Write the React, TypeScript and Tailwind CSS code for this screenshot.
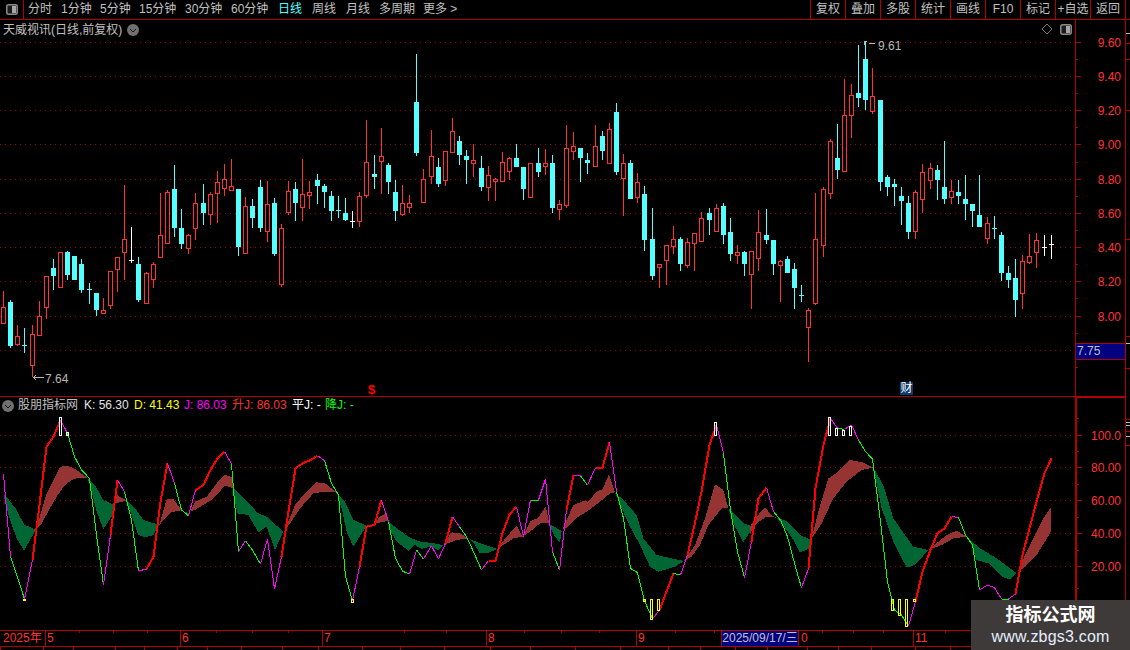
import React from "react";

const RED = "#b00000";
const cx = (i: number) => Math.round(3 + 7.127 * i);

// hi, top, bottom, low, kind (page pixel rows)
const C: [number, number, number, number, string][] = [
  [291,307,323,323,"r"],[300,302,346,348,"c"],[325,336,344,346,"r"],[328,345,345,353,"c"],[325,334,365,377,"r"],
  [301,316,335,335,"r"],[276,276,307,319,"r"],[259,268,276,290,"c"],[252,252,287,287,"r"],[251,252,275,280,"c"],
  [256,256,280,280,"c"],[259,264,290,293,"c"],[283,289,290,304,"c"],[293,293,310,316,"c"],[298,310,313,314,"r"],
  [271,271,305,309,"r"],[257,257,269,292,"r"],[185,239,252,280,"r"],[227,260,260,263,"w"],[257,264,300,302,"c"],
  [272,273,303,304,"r"],[262,264,279,288,"r"],[193,235,257,257,"r"],[190,192,243,243,"r"],[165,189,228,237,"c"],
  [209,228,244,249,"c"],[234,235,248,254,"r"],[193,203,228,240,"r"],[184,203,213,225,"c"],[192,194,214,225,"r"],
  [171,182,193,223,"r"],[164,179,188,196,"r"],[159,186,190,190,"r"],[189,189,247,256,"c"],[197,206,253,254,"r"],
  [199,206,218,228,"c"],[180,187,228,232,"c"],[181,204,231,242,"r"],[198,203,254,256,"c"],[224,228,284,287,"r"],
  [181,191,212,215,"r"],[182,189,203,221,"c"],[159,194,207,221,"r"],[181,192,195,209,"r"],[174,180,186,204,"c"],
  [184,186,192,208,"c"],[191,196,211,221,"c"],[196,210,211,218,"c"],[198,213,220,221,"c"],[211,221,221,228,"w"],
  [192,196,221,227,"r"],[120,162,195,198,"r"],[155,174,177,189,"c"],[128,156,161,194,"r"],[163,165,182,194,"c"],
  [180,192,211,221,"c"],[185,203,214,216,"r"],[195,203,207,213,"r"],[54,102,153,156,"c"],[169,179,202,202,"r"],
  [130,156,176,184,"r"],[158,167,184,187,"c"],[151,151,180,186,"r"],[118,131,152,152,"r"],[136,141,155,165,"c"],
  [150,156,160,184,"c"],[144,160,163,177,"r"],[156,168,187,191,"c"],[166,175,187,201,"r"],[178,179,181,201,"r"],
  [152,162,181,182,"r"],[157,158,171,180,"r"],[144,158,167,167,"c"],[167,167,189,200,"c"],[163,163,197,197,"r"],
  [148,163,172,177,"c"],[149,163,166,175,"r"],[155,163,208,213,"c"],[200,204,209,220,"r"],[125,148,205,208,"r"],
  [132,146,151,160,"r"],[148,148,158,182,"c"],[153,160,163,174,"c"],[125,146,166,166,"r"],[131,136,151,160,"c"],
  [123,129,163,163,"r"],[103,112,172,175,"c"],[154,163,178,216,"r"],[160,163,199,199,"c"],[173,182,197,203,"r"],
  [186,194,240,251,"c"],[208,239,276,280,"c"],[264,264,267,288,"r"],[245,245,260,285,"r"],[226,239,246,254,"r"],
  [237,239,264,271,"c"],[238,242,265,268,"r"],[233,233,243,271,"r"],[212,218,241,242,"r"],[208,213,220,235,"c"],
  [204,208,231,231,"r"],[203,206,235,244,"c"],[218,232,254,261,"c"],[245,252,255,264,"r"],[251,252,264,276,"c"],
  [251,251,274,309,"r"],[210,232,258,271,"r"],[209,235,240,244,"c"],[240,240,264,275,"c"],[260,261,265,302,"r"],
  [256,259,273,273,"c"],[263,269,288,309,"c"],[285,295,296,302,"c"],[308,310,327,362,"r"],[193,239,303,305,"r"],
  [187,189,245,257,"r"],[139,141,193,199,"r"],[124,158,170,179,"c"],[79,115,171,171,"r"],[84,95,115,138,"r"],
  [45,93,98,107,"c"],[41,59,100,110,"c"],[68,96,111,114,"r"],[100,100,182,191,"c"],[175,177,187,196,"c"],
  [179,184,187,206,"c"],[187,196,201,225,"c"],[196,203,232,239,"c"],[190,192,231,239,"r"],[164,172,199,213,"r"],
  [163,168,180,189,"r"],[165,170,180,200,"c"],[141,187,199,204,"c"],[180,191,197,204,"r"],[180,192,196,204,"c"],
  [175,199,204,220,"c"],[204,204,211,227,"c"],[175,215,227,227,"c"],[217,223,238,244,"r"],[216,228,229,239,"c"],
  [232,235,273,281,"c"],[266,273,280,288,"c"],[259,278,300,317,"c"],[255,261,293,309,"r"],[234,256,262,264,"r"],
  [233,240,252,268,"r"],[235,247,247,256,"w"],[235,244,244,259,"w"],
];

const UP_GRID = [42, 76, 110, 144, 179, 213, 247, 281, 316, 350];
const UP_LABELS: [number, string][] = [[42,"9.60"],[76,"9.40"],[110,"9.20"],[144,"9.00"],[179,"8.80"],[213,"8.60"],[247,"8.40"],[281,"8.20"],[316,"8.00"]];
const UP_MINOR = [59, 93, 127, 162, 196, 230, 264, 298, 333, 367];
const LO_LABELS: [number, string][] = [[435,"100.0"],[467,"80.00"],[500,"60.00"],[533,"40.00"],[566,"20.00"]];
const LO_MINOR = [418, 451, 484, 517, 550, 588];

const J = "237m 485g 548g 612m 495r 330r 155r 125r 75m 115g 185g 225g 250g 420g 570m 420r 255m 290g 375g 528m 522r 485r 320r 205m 265g 345g 362m 285r 270r 225r 190r 170m 207g 470m 437g 465g 507m 432m 582m 485r 350r 220r 205r 197r 182m 197g 265g 300g 545g 617m 515r 395r 390r 315m 380g 490g 528g 538m 465g 492m 452m 492m 445r 365m 395g 425g 470g 525m 497r 497r 415r 358r 335m 425m 315g 315m 252m 470g 525m 345r 240m 243g 270m 218r 218r 142m 290g 370g 520g 533g 617g 672m 645r 590r 535g 540m 480r 390r 290r 150r 90m 175g 345g 470g 548m 440r 310r 278m 350g 375g 425g 505g 578m 520r 280r 150r 70m 100g 103m 90m 135g 170g 192g 380g 560g 645g 660g 693m 620r 530r 465r 415r 400r 365m 367g 420g 450g 585m 570m 578m 612g 612m 597r 480r 400r 320r 235r 190r".split(" ");
const jy = (s: string) => 395 + parseInt(s) / 3;

// ribbon lobes: [zoom frame x offset, colour, points in 3x crop coordinates]
const RB = "#963333";
const GR = "#006633";
const R: [number, string, string][] = [
  [0,GR,"10,295 25,312 50,345 72,388 108,405 90,435 72,467 50,430 30,375 20,340"],
  [0,RB,"108,405 125,345 140,295 160,255 180,215 205,213 225,222 262,248 235,248 215,255 195,270 170,305 150,340 125,385"],
  [0,GR,"262,248 285,270 310,315 340,328 338,360 310,402 290,350 270,270"],
  [0,RB,"338,350 350,300 380,317 345,325"],
  [0,GR,"380,315 405,340 430,375 478,390 460,420 435,427 415,420 395,360"],
  [0,RB,"478,390 500,312 520,312 545,345 515,352 495,370"],
  [0,GR,"545,347 570,355 560,362"],
  [0,RB,"570,350 585,320 620,305 650,265 675,240 700,248 700,280 675,272 640,310 610,330 585,345"],
  [0,GR,"700,280 730,310 775,355 800,365 850,410 825,465 800,395 775,412 745,360 712,355 705,320"],
  [0,RB,"855,405 885,330 910,300 950,262 975,265 1010,292 975,290 940,295 900,340 870,385"],
  [0,GR,"1010,292 1035,320 1060,375 1100,392 1060,455 1040,410 1025,340"],
  [0,RB,"1100,392 1120,388 1140,365 1160,355 1162,378 1142,382 1120,388"],
  [380,GR,"22,375 50,400 90,428 120,440 150,443 190,450 175,465 150,455 125,462 105,450 85,467 50,440 30,405"],
  [380,RB,"190,448 215,412 240,415 265,430 230,435 205,445"],
  [380,GR,"265,430 300,445 352,462 320,475 300,475 285,450"],
  [380,RB,"352,460 380,425 410,392 428,425 400,430 370,450"],
  [380,RB,"428,425 450,380 475,368 497,335 508,385 480,385 450,410"],
  [380,GR,"508,388 545,407 540,442 525,425 515,405"],
  [380,RB,"547,405 580,330 610,318 625,320 650,290 668,282 687,237 705,292 690,295 660,320 620,350 590,368 565,395"],
  [380,GR,"705,292 735,320 770,360 790,430 830,480 875,490 912,498 885,515 835,530 810,515 780,450 750,395 725,340"],
  [380,RB,"912,498 945,450 975,370 1005,268 1030,285 1045,340 1025,340 985,390 960,450 935,485"],
  [380,GR,"1045,340 1090,385 1120,395 1090,442 1065,395"],
  [750,RB,"0,395 20,365 45,337 65,362 80,368 50,365 20,385 0,415"],
  [750,GR,"80,368 110,378 150,420 185,435 178,460 150,473 130,435 110,405"],
  [750,RB,"185,430 205,350 235,250 265,230 300,195 340,203 370,218 335,225 290,260 250,310 215,385"],
  [750,GR,"370,218 400,270 430,370 490,455 535,465 495,510 470,518 430,440 395,340"],
  [750,RB,"535,465 590,420 620,407 650,425 610,430 575,450"],
  [750,GR,"650,425 690,460 740,490 800,535 780,553 755,545 715,505 680,495 665,450"],
  [750,RB,"803,530 830,470 880,370 903,337 903,410 860,480 820,520"],
];

// hollow marker bars: page x, top, bottom, colour
const BARS: [number, number, number, string][] = [
  [60,417,435,"#ffffff"],[67,432,435,"#ffffff"],[715,422,435,"#ffffff"],[829,417,435,"#ffffff"],[836,428,435,"#ffffff"],[843,430,435,"#ffffff"],[850,426,435,"#ffffff"],
  [24,599,600,"#ffff00"],[352,599,602,"#ffff00"],[644,599,601,"#ffff00"],[651,599,619,"#ffff00"],[658,599,610,"#ffff00"],
  [892,599,610,"#ffff00"],[899,599,615,"#ffff00"],[906,599,626,"#ffff00"],[914,599,601,"#ffff00"],
];

const TICKS_TOP = [79,113,147,216,252,288,404,446,524,561,599,675,714,822,853,883,945];
const TICKS_BOTTOM = [0,43,73,115,144,177,207,241,282,318,362,400,444,490,530,575,620,668,700,735,767,807,838,871,915,950];
const STRIP: [number, string][] = [[33,"#bbbbbb"],[43,"#b00000"],[59,"#b00000"],[110,"#b00000"],[239,"#b00000"],[336,"#b00000"],[343,"#bbbbbb"],[368,"#b00000"]];
const STRIP_LOW: [number, string][] = [[419,"#b00000"],[422,"#bbbbbb"],[425,"#bbbbbb"],[431,"#b00000"],[436,"#bbbbbb"],[445,"#b00000"]];

function Chevron() {
  return (
    <svg width="12" height="12" viewBox="0 0 12 12" shapeRendering="crispEdges">
      <circle cx="6" cy="6" r="6" fill="#707070" shapeRendering="auto" />
      <path d="M3 5h1v1h1v1h2v-1h1v-1h1v1h-1v1h-1v1h-2v-1h-1v-1h-1z" fill="#161616" />
    </svg>
  );
}

function Toggle() {
  return (
    <svg width="12" height="11" viewBox="0 0 12 11">
      <rect x="0.75" y="0.75" width="10.5" height="9.5" rx="2" fill="#1c1c1c" stroke="#8a8a8a" strokeWidth="1.5" />
      <rect x="6" y="2" width="4" height="7" fill="#a8a8a8" />
    </svg>
  );
}

function UpperChart() {
  return (
    <svg className="block h-[376px] w-[1075px]" viewBox="0 20 1075 376" shapeRendering="crispEdges">
      {UP_GRID.map((y) => (
        <line key={y} x1="0" x2="1075" y1={y + 0.5} y2={y + 0.5} stroke="#a00000" strokeDasharray="1 4" />
      ))}
      {C.map(([h, t, b, l, k], i) => {
        const x = cx(i);
        const col = k === "r" ? "#ff3232" : k === "c" ? "#54ffff" : "#ffffff";
        return (
          <g key={i}>
            <rect x={x} y={h} width="1" height={Math.max(1, l - h)} fill={col} />
            {k === "r" ? (
              <rect x={x - 1.5} y={t + 0.5} width="4" height={Math.max(1, b - t)} fill="#000" stroke={col} />
            ) : (
              <rect x={x - 2} y={t} width="5" height={Math.max(1, b - t)} fill={col} />
            )}
          </g>
        );
      })}
      <path d="M44 377.5H33M33 377.5l3-2M33 377.5l3 2" stroke="#b8b8b8" fill="none" />
      <text x="45" y="383" fontSize="12" fill="#b8b8b8" shapeRendering="auto">7.64</text>
      <path d="M864 41.5h3M864 41.5v3M869 43.5h6" stroke="#b8b8b8" fill="none" />
      <text x="878" y="50" fontSize="12" fill="#b8b8b8" shapeRendering="auto">9.61</text>
      <path d="M1047 24l5 5-5 5-5-5z" fill="none" stroke="#777" shapeRendering="auto" />
    </svg>
  );
}

function UpperAxis() {
  return (
    <svg className="block h-[376px] w-[55px]" viewBox="1075 20 55 376" shapeRendering="crispEdges">
      <rect x="1075" y="20" width="1" height="376" fill={RED} />
      <rect x="1125" y="20" width="1" height="376" fill={RED} />
      {UP_MINOR.map((y) => <rect key={y} x="1075" y={y} width="3" height="1" fill={RED} />)}
      {UP_LABELS.map(([y, s]) => (
        <g key={s}>
          <rect x="1075" y={y} width="6" height="1" fill={RED} />
          <text x="1121" y={y + 5} textAnchor="end" fontSize="12" fill="#ff3232" shapeRendering="auto">{s}</text>
        </g>
      ))}
      {STRIP.map(([y, c]) => <rect key={y} x="1126" y={y} width="4" height="1" fill={c} />)}
    </svg>
  );
}

function LowerChart() {
  const segs = [];
  for (let i = 0; i < J.length - 1; i++) {
    const k = J[i].slice(-1);
    segs.push(
      <line
        key={i}
        x1={cx(i) + 0.5}
        y1={jy(J[i])}
        x2={cx(i + 1) + 0.5}
        y2={jy(J[i + 1])}
        stroke={k === "r" ? "#ff0000" : k === "m" ? "#ff00ff" : "#00ff00"}
        strokeWidth={k === "r" ? 2 : 1}
      />
    );
  }
  return (
    <svg className="block h-[234px] w-[1075px]" viewBox="0 396 1075 234" shapeRendering="crispEdges">
      <rect x="0" y="396" width="1075" height="1" fill={RED} />
      {LO_LABELS.map(([y]) => (
        <line key={y} x1="0" x2="1075" y1={y + 0.5} y2={y + 0.5} stroke="#a00000" strokeDasharray="1 4" />
      ))}
      {R.map(([off, c, p], i) => (
        <polygon
          key={i}
          fill={c}
          points={p.split(" ").map((q) => {
            const [a, b] = q.split(",").map(Number);
            return `${off + a / 3},${395 + b / 3}`;
          }).join(" ")}
        />
      ))}
      {segs}
      {BARS.map(([x, t, b, c], i) => (
        <rect key={i} x={x - 0.5} y={t + 0.5} width="2" height={b - t} fill="none" stroke={c} />
      ))}
    </svg>
  );
}

function LowerAxis() {
  return (
    <svg className="block h-[234px] w-[55px]" viewBox="1075 396 55 234" shapeRendering="crispEdges">
      <rect x="1075" y="396" width="51" height="2" fill={RED} />
      <rect x="1075" y="396" width="2" height="234" fill={RED} />
      <rect x="1125" y="396" width="1" height="234" fill={RED} />
      {LO_MINOR.map((y) => <rect key={y} x="1077" y={y} width="2" height="1" fill={RED} />)}
      {LO_LABELS.map(([y, s]) => (
        <g key={s}>
          <rect x="1077" y={y} width="5" height="1" fill={RED} />
          <text x="1121" y={y + 5} textAnchor="end" fontSize="12" fill="#ff3232" shapeRendering="auto">{s}</text>
        </g>
      ))}
      {STRIP_LOW.map(([y, c]) => <rect key={y} x="1126" y={y} width="4" height="1" fill={c} />)}
    </svg>
  );
}

const LEFT_TABS: [string, string][] = [
  ["分时", "w-[33px]"], ["1分钟", "w-[39px]"], ["5分钟", "w-[39px]"], ["15分钟", "w-[46px]"], ["30分钟", "w-[46px]"],
  ["60分钟", "w-[47px]"], ["日线", "w-[34px] text-[#54ffff]"], ["周线", "w-[34px]"], ["月线", "w-[33px]"], ["多周期", "w-[44px]"], ["更多 >", "w-[44px]"],
];
const RIGHT_TABS = ["复权", "叠加", "多股", "统计", "画线", "F10", "标记", "+自选", "返回"];

function Month({ w, label }: { w: string; label: string }) {
  return <div className={`${w} border-l border-[#b00000] pl-px leading-[15px]`}>{label}</div>;
}

export default function App() {
  return (
    <div className="relative flex h-[650px] w-[1130px] flex-col overflow-hidden bg-black text-[12px] text-[#c0c0c0] font-['Liberation_Sans','Noto_Sans_CJK_SC',sans-serif]">
      <header className="flex h-[20px] shrink-0 border-b border-[#b00000]">
        <div className="flex w-[24px] items-center justify-center border-r border-[#b00000]">
          <Toggle />
        </div>
        <nav className="flex items-center pl-[4px] leading-[19px]">
          {LEFT_TABS.map(([t, c]) => (
            <span key={t} className={`${c} whitespace-nowrap`}>{t}</span>
          ))}
        </nav>
        <nav className="ml-auto flex pr-[4px]">
          {RIGHT_TABS.map((t) => (
            <span key={t} className="w-[35px] whitespace-nowrap border-l border-[#b00000] text-center leading-[19px]">{t}</span>
          ))}
          <span className="w-px border-l border-[#b00000]" />
        </nav>
      </header>

      <section className="relative flex h-[376px] shrink-0">
        <UpperChart />
        <UpperAxis />
        <div className="absolute left-[3px] top-[2px] flex h-[16px] items-center gap-[5px] leading-[16px]">
          <span>天威视讯(日线,前复权)</span>
          <Chevron />
        </div>
        <div className="absolute left-[1060px] top-[4px]"><Toggle /></div>
        <div className="absolute left-[1075px] top-[323px] h-[17px] w-[51px] border border-[#b00000] bg-[#000080] pl-[1px] leading-[15px]">7.75</div>
        <span className="absolute left-[368px] top-[363px] text-[13px] font-bold leading-[14px] text-[#ff0000]">$</span>
        <span className="absolute left-[900px] top-[362px] h-[13px] w-[13px] bg-[#0a3a6e] text-center leading-[13px] text-white">财</span>
      </section>

      <section className="relative flex h-[234px] shrink-0">
        <LowerChart />
        <LowerAxis />
        <div className="absolute left-[2px] top-[3px] flex h-[13px] items-center whitespace-nowrap leading-[13px]">
          <Chevron />
          <span className="ml-[4px] w-[66px]">股朋指标网</span>
          <span className="w-[50px] text-[#e4e4e4]">K: 56.30</span>
          <span className="w-[50px] text-[#ffff00]">D: 41.43</span>
          <span className="w-[48px] text-[#ff00ff]">J: 86.03</span>
          <span className="w-[60px] text-[#ff3232]">升J: 86.03</span>
          <span className="w-[33px] text-white">平J: -</span>
          <span className="text-[#00ff00]">降J: -</span>
        </div>
      </section>

      <footer className="relative flex h-[17px] shrink-0 border-y border-[#b00000] text-[#ff3232]">
        <div className="w-[45px] pl-[3px] leading-[15px]">2025年</div>
        <Month w="w-[135px]" label="5" />
        <Month w="w-[142px]" label="6" />
        <Month w="w-[164px]" label="7" />
        <Month w="w-[150px]" label="8" />
        <Month w="w-[85px]" label="9" />
        <div className="flex h-[15px] w-[78px] items-center justify-center whitespace-nowrap border-x border-[#b00000] bg-[#000080] leading-[15px] text-[#c0c0c0]">2025/09/17/三</div>
        <div className="w-[114px] pl-[2px] leading-[15px]">0</div>
        <Month w="w-[60px]" label="11" />
        <div className="flex-1" />
        <svg className="absolute left-0 top-0 h-[3px] w-[1075px]" viewBox="0 0 1075 3" shapeRendering="crispEdges">
          {TICKS_TOP.map((x) => <rect key={x} x={x} y="0" width="1" height="2" fill={RED} />)}
        </svg>
      </footer>

      <svg className="block h-[3px] w-[1130px] shrink-0" viewBox="0 0 1130 3" shapeRendering="crispEdges">
        {TICKS_BOTTOM.map((x) => <rect key={x} x={x} y="0" width="1" height="3" fill={RED} />)}
      </svg>

      <aside className="absolute left-[971px] top-[600px] flex h-[50px] w-[159px] flex-col items-center bg-[#3f3a3a]">
        <div className="mt-[3px] text-[18px] font-bold leading-[24px] text-white">指标公式网</div>
        <div className="text-[16px] leading-[20px] tracking-[0.2px] text-[#e4f0fc]">www.zbgs3.com</div>
      </aside>
    </div>
  );
}
